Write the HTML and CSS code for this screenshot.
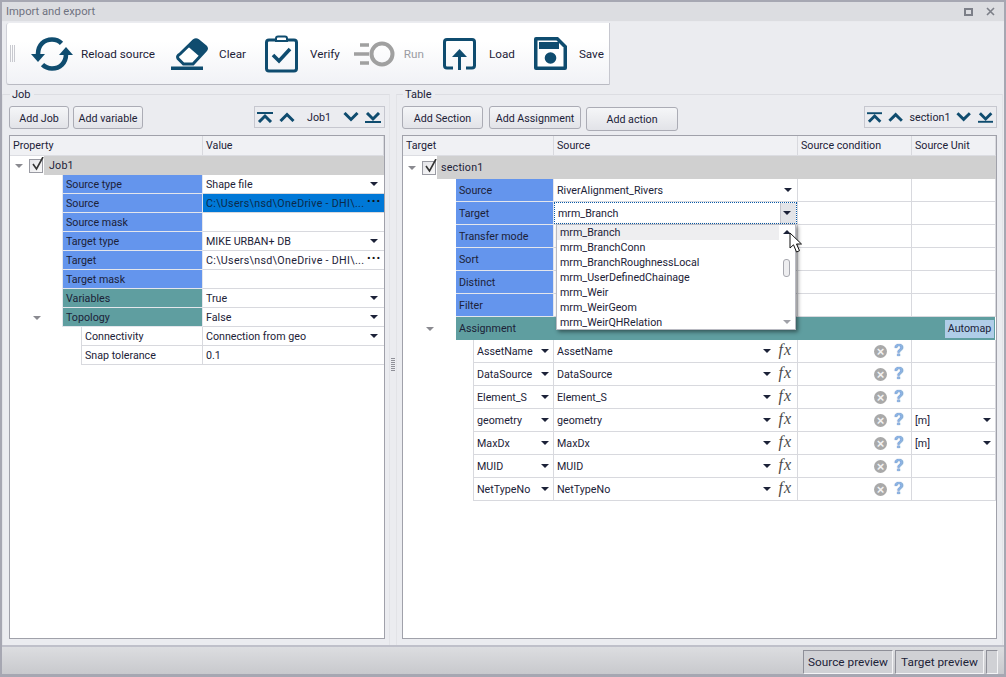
FILE: index.html
```
<!DOCTYPE html>
<html>
	<head>
		<meta charset="utf-8">
		<title>Import and export</title>
		<link rel="stylesheet" href="styles.css">
	</head>
	<body>
		<div class="window">
			<div class="title-bar">
				<span class="title-text">Import and export</span>
				<span class="win-max"></span>
				<svg class="win-close" width="9" height="9" viewBox="0 0 9 9"><path d="M1 1l7 7M8 1l-7 7" stroke="#7c7f88" stroke-width="1.6"/></svg>
			</div>

			<div class="toolbar">
				<span class="grip"></span>
				<div class="tool tool-reload">
					<svg width="42" height="34" viewBox="0 0 42 34" fill="none">
						<path d="M7 17C7 8 13 2.500 21 2.500c4 0 7 1.300 9.500 3.800" stroke="#0f4c6f" stroke-width="4.600"/>
						<path d="M35 17c0 9-6 14.500-14 14.500-4 0-7-1.300-9.500-3.800" stroke="#0f4c6f" stroke-width="4.600"/>
						<path d="M0 17h14l-7 8zM28 18h14l-7-8z" fill="#0f4c6f"/>
					</svg>
					<span>Reload source</span>
				</div>
				<div class="tool tool-clear">
					<svg width="38" height="32" viewBox="0 0 38 32">
						<path d="M9 16L23 2.500q2-1.500 4 0l7.500 6q2 2 0 4L22 26H12.500L7 20.500q-1.500-2.500 2-4.500z" fill="#fff" stroke="#0f4c6f" stroke-width="3"/>
						<path d="M17 8.500L23 2.500q2-1.500 4 0l7.500 6q2 2 0 4l-6 6z" fill="#0f4c6f"/>
						<path d="M0 28.500h32V32H0z" fill="#0f4c6f"/>
					</svg>
					<span>Clear</span>
				</div>
				<div class="tool tool-verify">
					<svg width="33" height="38" viewBox="0 0 33 38" fill="none">
						<rect x="1.500" y="5" width="30" height="31" rx="2.500" stroke="#0f4c6f" stroke-width="3"/>
						<path d="M11 6V3.500q0-2 2-2h7q2 0 2 2V6z" fill="#fff" stroke="#0f4c6f" stroke-width="2"/>
						<path d="M8 20l6 6L25 14" stroke="#0f4c6f" stroke-width="3.600"/>
					</svg>
					<span>Verify</span>
				</div>
				<div class="tool tool-run">
					<svg width="41" height="26" viewBox="0 0 41 26" fill="none">
						<circle cx="28" cy="13" r="10.500" stroke="#a0a0a0" stroke-width="4"/>
						<path d="M6 4h9M0 13h15M6 22h9" stroke="#a0a0a0" stroke-width="3.400"/>
					</svg>
					<span>Run</span>
				</div>
				<div class="tool tool-load">
					<svg width="33" height="32" viewBox="0 0 33 32" fill="none">
						<path d="M10 30H4q-2.500 0-2.500-2.500V4Q1.500 1.500 4 1.500h25q2.500 0 2.500 2.500v23.500q0 2.500-2.500 2.500h-6" stroke="#0f4c6f" stroke-width="3"/>
						<path d="M16.500 32V17" stroke="#0f4c6f" stroke-width="3"/>
						<path d="M16.500 11l7.500 8H9z" fill="#0f4c6f"/>
					</svg>
					<span>Load</span>
				</div>
				<div class="tool tool-save">
					<svg width="33" height="33" viewBox="0 0 33 33">
						<path d="M2 0h22l9 9v22q0 2-2 2H2q-2 0-2-2V2q0-2 2-2z" fill="#0f4c6f"/>
						<path d="M3.500 3.500v26h26V10.500L22.500 3.500z" fill="#fff"/>
						<path d="M5 5h20v7H5z" fill="#0f4c6f"/>
						<circle cx="16.500" cy="21" r="5.800" fill="#0f4c6f"/>
					</svg>
					<span>Save</span>
				</div>
			</div>

			<div class="panels">
				<div class="group group-job">
					<div class="legend">Job</div>
					<div class="button-row">
						<button class="btn btn-job">Add Job</button>
						<button class="btn btn-variable">Add variable</button>
						<div class="nav nav-job">
							<svg width="16" height="11" viewBox="0 0 16 11"><path d="M0 1h16" stroke="#0f4c6f" stroke-width="2"/><path d="M2 10l6-6 6 6" fill="none" stroke="#0f4c6f" stroke-width="3"/></svg>
							<svg width="16" height="10" viewBox="0 0 16 10"><path d="M1.500 9L8 2.500 14.500 9" fill="none" stroke="#0f4c6f" stroke-width="3"/></svg>
							<span class="nav-label">Job1</span>
							<svg width="16" height="10" viewBox="0 0 16 10"><path d="M1.500 1L8 7.500 14.500 1" fill="none" stroke="#0f4c6f" stroke-width="3"/></svg>
							<svg width="16" height="11" viewBox="0 0 16 11"><path d="M2 1l6 6 6-6" fill="none" stroke="#0f4c6f" stroke-width="3"/><path d="M0 10h16" stroke="#0f4c6f" stroke-width="2"/></svg>
						</div>
					</div>
					<div class="grid-box">
						<div class="head head-job">
							<div class="head-cell">Property</div>
							<div class="head-cell">Value</div>
						</div>
						<div class="root-row root-job">
							<span class="expander"></span>
							<span class="check"><svg width="13" height="14" viewBox="0 0 13 14"><path d="M2 7l3.500 5L12 0" fill="none" stroke="#333" stroke-width="1.600"/></svg></span>
							<span class="root-name">Job1</span>
						</div>
						<div class="prop-row"><div class="indent"></div><div class="name blue">Source type</div><div class="val">Shape file<i class="caret"></i></div></div>
						<div class="prop-row"><div class="indent"></div><div class="name blue">Source</div><div class="val val-selected"><span class="path">C:\Users\nsd\OneDrive - DHI\...</span><b class="dots">···</b></div></div>
						<div class="prop-row"><div class="indent"></div><div class="name blue">Source mask</div><div class="val"></div></div>
						<div class="prop-row"><div class="indent"></div><div class="name blue">Target type</div><div class="val">MIKE URBAN+ DB<i class="caret"></i></div></div>
						<div class="prop-row"><div class="indent"></div><div class="name blue">Target</div><div class="val"><span class="path">C:\Users\nsd\OneDrive - DHI\...</span><b class="dots">···</b></div></div>
						<div class="prop-row"><div class="indent"></div><div class="name blue">Target mask</div><div class="val"></div></div>
						<div class="prop-row"><div class="indent"></div><div class="name teal">Variables</div><div class="val">True<i class="caret"></i></div></div>
						<div class="prop-row"><div class="indent"><span class="expander expander-sub"></span></div><div class="name teal">Topology</div><div class="val">False<i class="caret"></i></div></div>
						<div class="prop-row sub"><div class="indent"></div><div class="name">Connectivity</div><div class="val">Connection from geo<i class="caret"></i></div></div>
						<div class="prop-row sub"><div class="indent"></div><div class="name">Snap tolerance</div><div class="val">0.1</div></div>
					</div>
				</div>

				<div class="splitter"><span class="splitter-dots"></span></div>

				<div class="group group-table">
					<div class="legend">Table</div>
					<div class="button-row">
						<button class="btn btn-section">Add Section</button>
						<button class="btn btn-assign">Add Assignment</button>
						<button class="btn btn-action">Add action</button>
						<div class="nav nav-section">
							<svg width="16" height="11" viewBox="0 0 16 11"><path d="M0 1h16" stroke="#0f4c6f" stroke-width="2"/><path d="M2 10l6-6 6 6" fill="none" stroke="#0f4c6f" stroke-width="3"/></svg>
							<svg width="16" height="10" viewBox="0 0 16 10"><path d="M1.500 9L8 2.500 14.500 9" fill="none" stroke="#0f4c6f" stroke-width="3"/></svg>
							<span class="nav-label">section1</span>
							<svg width="16" height="10" viewBox="0 0 16 10"><path d="M1.500 1L8 7.500 14.500 1" fill="none" stroke="#0f4c6f" stroke-width="3"/></svg>
							<svg width="16" height="11" viewBox="0 0 16 11"><path d="M2 1l6 6 6-6" fill="none" stroke="#0f4c6f" stroke-width="3"/><path d="M0 10h16" stroke="#0f4c6f" stroke-width="2"/></svg>
						</div>
					</div>
					<div class="grid-box">
						<div class="head head-table">
							<div class="head-cell">Target</div>
							<div class="head-cell">Source</div>
							<div class="head-cell">Source condition</div>
							<div class="head-cell">Source Unit</div>
						</div>
						<div class="root-row root-table">
							<span class="expander"></span>
							<span class="check"><svg width="13" height="14" viewBox="0 0 13 14"><path d="M2 7l3.500 5L12 0" fill="none" stroke="#333" stroke-width="1.600"/></svg></span>
							<span class="root-name">section1</span>
						</div>

						<div class="sec-row"><div></div><div class="sec-name blue">Source</div><div class="sec-val">RiverAlignment_Rivers<i class="caret"></i></div><div class="sec-val"></div><div class="sec-val"></div></div>
						<div class="sec-row"><div></div><div class="sec-name blue">Target</div>
							<div class="sec-val combo">
								<div class="combo-edit">mrm_Branch<span class="combo-btn"><i class="caret"></i></span></div>
								<div class="popup">
									<div class="popup-item popup-active">mrm_Branch</div>
									<div class="popup-item">mrm_BranchConn</div>
									<div class="popup-item">mrm_BranchRoughnessLocal</div>
									<div class="popup-item">mrm_UserDefinedChainage</div>
									<div class="popup-item">mrm_Weir</div>
									<div class="popup-item">mrm_WeirGeom</div>
									<div class="popup-item">mrm_WeirQHRelation</div>
									<i class="scroll-up"></i>
									<span class="scroll-thumb"></span>
									<i class="scroll-down"></i>
									<svg class="pointer" width="14" height="21" viewBox="0 0 14 21"><path d="M1 1v15l3.500-3.200L7.500 20l3-1.300-3-6.700h5z" fill="#fff" stroke="#111" stroke-width="1"/></svg>
								</div>
							</div>
							<div class="sec-val"></div><div class="sec-val"></div></div>
						<div class="sec-row"><div></div><div class="sec-name blue">Transfer mode</div><div class="sec-val"></div><div class="sec-val"></div><div class="sec-val"></div></div>
						<div class="sec-row"><div></div><div class="sec-name blue">Sort</div><div class="sec-val"></div><div class="sec-val"></div><div class="sec-val"></div></div>
						<div class="sec-row"><div></div><div class="sec-name blue">Distinct</div><div class="sec-val"></div><div class="sec-val"></div><div class="sec-val"></div></div>
						<div class="sec-row"><div></div><div class="sec-name blue">Filter</div><div class="sec-val"></div><div class="sec-val"></div><div class="sec-val"></div></div>

						<div class="assign-head">
							<span class="expander expander-assign"></span>
							<div class="assign-bar">Assignment<span class="automap">Automap</span></div>
						</div>

						<div class="map-row"><div></div><div class="map-target">AssetName<i class="caret"></i></div><div class="map-source">AssetName<i class="caret"></i><em class="fx">fx</em></div><div class="map-cond"><span class="clear-btn">×</span><span class="help">?</span></div><div class="map-unit"></div></div>
						<div class="map-row"><div></div><div class="map-target">DataSource<i class="caret"></i></div><div class="map-source">DataSource<i class="caret"></i><em class="fx">fx</em></div><div class="map-cond"><span class="clear-btn">×</span><span class="help">?</span></div><div class="map-unit"></div></div>
						<div class="map-row"><div></div><div class="map-target">Element_S<i class="caret"></i></div><div class="map-source">Element_S<i class="caret"></i><em class="fx">fx</em></div><div class="map-cond"><span class="clear-btn">×</span><span class="help">?</span></div><div class="map-unit"></div></div>
						<div class="map-row"><div></div><div class="map-target">geometry<i class="caret"></i></div><div class="map-source">geometry<i class="caret"></i><em class="fx">fx</em></div><div class="map-cond"><span class="clear-btn">×</span><span class="help">?</span></div><div class="map-unit">[m]<i class="caret"></i></div></div>
						<div class="map-row"><div></div><div class="map-target">MaxDx<i class="caret"></i></div><div class="map-source">MaxDx<i class="caret"></i><em class="fx">fx</em></div><div class="map-cond"><span class="clear-btn">×</span><span class="help">?</span></div><div class="map-unit">[m]<i class="caret"></i></div></div>
						<div class="map-row"><div></div><div class="map-target">MUID<i class="caret"></i></div><div class="map-source">MUID<i class="caret"></i><em class="fx">fx</em></div><div class="map-cond"><span class="clear-btn">×</span><span class="help">?</span></div><div class="map-unit"></div></div>
						<div class="map-row"><div></div><div class="map-target">NetTypeNo<i class="caret"></i></div><div class="map-source">NetTypeNo<i class="caret"></i><em class="fx">fx</em></div><div class="map-cond"><span class="clear-btn">×</span><span class="help">?</span></div><div class="map-unit"></div></div>
					</div>
				</div>
			</div>

			<div class="status-bar">
				<span class="status-btn status-source">Source preview</span>
				<span class="status-btn status-target">Target preview</span>
				<span class="status-btn status-end"></span>
			</div>
		</div>
	</body>
</html>
```
FILE: styles.css
```
* {
	box-sizing: border-box;
}

html,
body {
	margin: 0;
	height: 100%;
	overflow: hidden;
}

body {
	font-family: Roboto, "Liberation Sans", sans-serif;
	font-size: 10.7px;
	color: #1c2238;
}

.window {
	width: 1006px;
	height: 677px;
	display: flex;
	flex-direction: column;
	background: #ebecf0;
	border: 2px solid #a6a7b2;
	border-bottom-width: 3px;
}

/* title */
.title-bar {
	height: 20px;
	flex: none;
	display: flex;
	align-items: center;
	padding: 0 6px 0 4px;
	background: #dcdde1;
	border-bottom: 1px solid #e9eaee;
}

.title-text {
	flex: 1;
	color: #6f7280;
	font-size: 11.2px;
}

.win-max {
	width: 9px;
	height: 8px;
	border: 2px solid #7c7f88;
	margin-right: 13px;
}

.win-close {
	margin-right: 3px;
}

/* toolbar */
.toolbar {
	width: 604px;
	height: 62px;
	flex: none;
	margin: 1px 0 0 4px;
	display: flex;
	align-items: center;
	font-size: 11.7px;
	background: linear-gradient(#ffffff 30%, #f1f2f6);
	border-radius: 3px 0 0 3px;
	border-bottom: 1px solid #b9bac2;
	border-right: 1px solid #c6c7cf;
	border-left: 1px solid #d0d1d8;
}

.grip {
	width: 5px;
	height: 17px;
	margin: 0 16px 0 3px;
	background: repeating-linear-gradient(90deg, #c8c9cf 0 1px, transparent 1px 2px);
}

.tool {
	display: flex;
	align-items: center;
	gap: 8px;
	white-space: nowrap;
}

.tool-clear {
	margin-left: 16px;
	gap: 10px;
}

.tool-verify {
	margin-left: 19px;
	gap: 12px;
}

.tool-run {
	margin-left: 14px;
	gap: 9px;
	color: #9a9ba3;
}

.tool-load {
	margin-left: 19px;
	gap: 13px;
}

.tool-save {
	margin-left: 19px;
	gap: 12px;
}

/* panels */
.panels {
	flex: 1;
	min-height: 0;
	display: flex;
}

.group {
	display: flex;
	flex-direction: column;
	margin-top: 9px;
	border-top: 1px solid #dcdde2;
	border-left: 1px solid #e2e3e7;
	border-right: 1px solid #e2e3e7;
	position: relative;
}

.group-job {
	width: 388px;
	padding: 0 4px 6px 6px;
}

.group-table {
	width: 607px;
	padding: 0 5px 6px 5px;
}

.legend {
	position: absolute;
	top: -8px;
	left: 7px;
	padding: 0 3px 0 2px;
	background: #ebecf0;
	line-height: 15px;
	font-size: 11px;
}

.group-table .legend {
	left: 6px;
}

.button-row {
	height: 29px;
	margin-top: 11px;
	flex: none;
	display: flex;
	align-items: flex-start;
}

.btn {
	height: 23px;
	padding: 1px 0 0;
	font: inherit;
	color: inherit;
	background: linear-gradient(#f5f6f8, #e2e3e8);
	border: 1px solid #abacb5;
	border-radius: 3px;
}

.btn-job {
	width: 60px;
	margin-right: 4px;
}

.btn-variable {
	width: 70px;
}

.btn-section {
	width: 81px;
	margin-right: 6px;
}

.btn-assign {
	width: 92px;
	margin-right: 5px;
}

.btn-action {
	width: 92px;
	height: 24px;
	margin-top: 1px;
}

.nav {
	height: 22px;
	display: flex;
	align-items: center;
	margin-left: auto;
	border: 1px solid #c6c7cf;
}

.nav-job {
	width: 131px;
	padding: 0 3px 0 2px;
	gap: 6px;
}

.nav-section {
	width: 133px;
	padding: 0 3px 0 2px;
	gap: 6px;
}

.nav-job .nav-label {
	flex: 1;
	text-align: center;
}

.nav-section .nav-label {
	flex: 1;
	white-space: nowrap;
}

/* grid */
.grid-box {
	flex: 1;
	min-height: 0;
	background: #ffffff;
	border: 1px solid #a0a1aa;
	position: relative;
}

.head {
	height: 20px;
	display: grid;
	background: #f0f1f4;
	border-bottom: 1px solid #dcdde2;
}

.head-job {
	grid-template-columns: 193px 1fr;
}

.head-table {
	grid-template-columns: 151px 244px 114px 1fr;
}

.head-cell {
	padding: 1px 0 0 3px;
	line-height: 18px;
	border-right: 1px solid #d8d9de;
}

.root-row {
	display: flex;
	align-items: center;
	position: relative;
	background: linear-gradient(90deg, #ffffff 34px, #d0d0d0 34px);
}

.root-job {
	height: 19px;
	padding-left: 5px;
}

.root-table {
	height: 23px;
	padding-left: 5px;
}

.expander {
	width: 0;
	height: 0;
	border-left: 4px solid transparent;
	border-right: 4px solid transparent;
	border-top: 4px solid #8a8a90;
	flex: none;
}

.check {
	width: 14px;
	height: 14px;
	margin-left: 6px;
	border: 1px solid #9a9ba3;
	background: linear-gradient(135deg, #e4e4e8, #fafafa);
	position: relative;
}

.check svg {
	position: absolute;
	left: 1px;
	top: -3px;
}

.root-name {
	margin-left: 6px;
	letter-spacing: 0.2px;
}

.root-table .root-name {
	margin-left: 5px;
}

.prop-row {
	height: 19px;
	display: grid;
	grid-template-columns: 52px 141px 1fr;
	line-height: 17px;
}

.prop-row.sub {
	grid-template-columns: 71px 122px 1fr;
}

.prop-row .indent {
	display: flex;
	align-items: center;
	padding-left: 23px;
}

.prop-row .name {
	padding: 1px 0 0 3px;
	border-right: 1px solid #d8d9de;
	border-bottom: 1px solid #d8d9de;
	border-left: 1px solid #d8d9de;
}

.blue {
	background: #6495ed;
}

.teal {
	background: #5f9ea0;
}

.prop-row .name.blue,
.prop-row .name.teal,
.sec-name {
	border-color: #e4e6ec;
}

.val {
	position: relative;
	padding: 1px 0 0 3px;
	border-bottom: 1px solid #d8d9de;
	white-space: nowrap;
}

.val .caret {
	right: 6px;
}

.val-selected {
	background: #0078d7;
	color: #0c2a4a;
}

.path {
	letter-spacing: 0.3px;
}

.dots {
	position: absolute;
	right: 3px;
	top: -1px;
	font-size: 14px;
	font-weight: 700;
	letter-spacing: 0.5px;
	color: #111;
}

.caret {
	position: absolute;
	right: 5px;
	top: 50%;
	margin-top: -2px;
	width: 0;
	height: 0;
	border-left: 4px solid transparent;
	border-right: 4px solid transparent;
	border-top: 4px solid #1c2238;
}

/* section rows */
.sec-row {
	height: 23px;
	display: grid;
	grid-template-columns: 53px 98px 244px 114px 1fr;
	line-height: 21px;
}

.sec-name {
	padding: 1px 0 0 3px;
	border-right: 1px solid #e4e6ec;
	border-bottom: 1px solid #e4e6ec;
}

.sec-val {
	position: relative;
	padding: 1px 0 0 3px;
	border-right: 1px solid #d8d9de;
	border-bottom: 1px solid #d8d9de;
}

.combo {
	padding: 0;
}

.combo-edit {
	height: 22px;
	line-height: 21px;
	padding-left: 3px;
	border: 1px dotted #0a5aa8;
	position: relative;
}

.combo-btn {
	position: absolute;
	top: 0;
	right: 0;
	width: 16px;
	height: 20px;
	background: #e3e4e8;
	border-left: 1px solid #c4c5cc;
}

.popup {
	position: absolute;
	top: 22px;
	left: 2px;
	width: 240px;
	height: 106px;
	z-index: 5;
	background: #ffffff;
	border: 1px solid #b9bac2;
	box-shadow: 2px 2px 4px rgba(0, 0, 0, 0.45);
}

.popup-item {
	height: 15px;
	line-height: 15px;
	padding-left: 3px;
	white-space: nowrap;
}

.popup-active {
	background: #eeeef0;
	width: 222px;
}

.scroll-up,
.scroll-down {
	position: absolute;
	right: 4px;
	width: 0;
	height: 0;
	border-left: 4px solid transparent;
	border-right: 4px solid transparent;
}

.scroll-up {
	top: 5px;
	border-bottom: 4px solid #1c2238;
}

.scroll-down {
	bottom: 5px;
	border-top: 4px solid #a0a1a8;
}

.scroll-thumb {
	position: absolute;
	right: 5px;
	top: 34px;
	width: 7px;
	height: 18px;
	background: #eeeef0;
	border: 1px solid #a8a9b0;
	border-radius: 3px;
}

.pointer {
	position: absolute;
	right: -8px;
	top: 7px;
}

/* assignment */
.assign-head {
	height: 23px;
	display: flex;
	align-items: center;
	padding-left: 23px;
}

.expander-assign {
	margin-right: 22px;
}

.assign-bar {
	flex: 1;
	height: 23px;
	margin-right: 1px;
	display: flex;
	align-items: center;
	justify-content: space-between;
	padding: 0 1px 0 3px;
	background: #5f9ea0;
}

.automap {
	width: 49px;
	height: 18px;
	line-height: 18px;
	text-align: center;
	background: #b0cde8;
}

.map-row {
	height: 23px;
	display: grid;
	grid-template-columns: 70px 81px 244px 114px 1fr;
	line-height: 21px;
}

.map-target,
.map-source,
.map-cond,
.map-unit {
	position: relative;
	padding: 1px 0 0 3px;
	border-right: 1px solid #d8d9de;
	border-bottom: 1px solid #d8d9de;
	white-space: nowrap;
}

.map-target {
	border-left: 1px solid #d8d9de;
}

.map-target .caret {
	right: 4px;
}

.map-source .caret {
	right: 26px;
}

.map-unit .caret {
	right: 4px;
}

.fx {
	position: absolute;
	right: 5px;
	top: 0;
	font: italic 16px/20px "Liberation Serif", serif;
	letter-spacing: 1px;
	color: #4a4a4a;
}

.map-cond {
	display: flex;
	align-items: center;
	justify-content: flex-end;
	gap: 7px;
	padding: 0 7px 0 3px;
}

.clear-btn {
	width: 13px;
	height: 13px;
	border-radius: 50%;
	background: #a9a9a9;
	color: #f2f2f2;
	font: 700 13px/13px "Liberation Sans", sans-serif;
	text-align: center;
}

.help {
	font: 700 16px/20px "Liberation Sans", sans-serif;
	color: #8db4e4;
	text-shadow: 0 0 1px #2f5fa8;
	width: 10px;
	text-align: center;
	margin-top: -1px;
}

/* splitter */
.splitter {
	width: 6px;
	display: flex;
	align-items: center;
	justify-content: center;
	padding-bottom: 2px;
}

.splitter-dots {
	width: 4px;
	height: 13px;
	background: repeating-linear-gradient(#8f9098 0 1px, transparent 1px 2px);
}

/* status */
.status-bar {
	height: 29px;
	flex: none;
	display: flex;
	justify-content: flex-end;
	align-items: flex-end;
	gap: 2px;
	padding: 0 6px 0 0;
	font-size: 11.8px;
	background: linear-gradient(#dcdde0, #c8c9cd);
	border-top: 2px solid #bfc0ca;
}

.status-btn {
	height: 24px;
	line-height: 22px;
	text-align: center;
	border: 1px solid #f4f4f6;
	border-top-color: #8e8f98;
	border-left-color: #8e8f98;
	background: #d0d1d5;
}

.status-source {
	width: 90px;
}

.status-target {
	width: 89px;
}

.status-end {
	width: 12px;
}
```
